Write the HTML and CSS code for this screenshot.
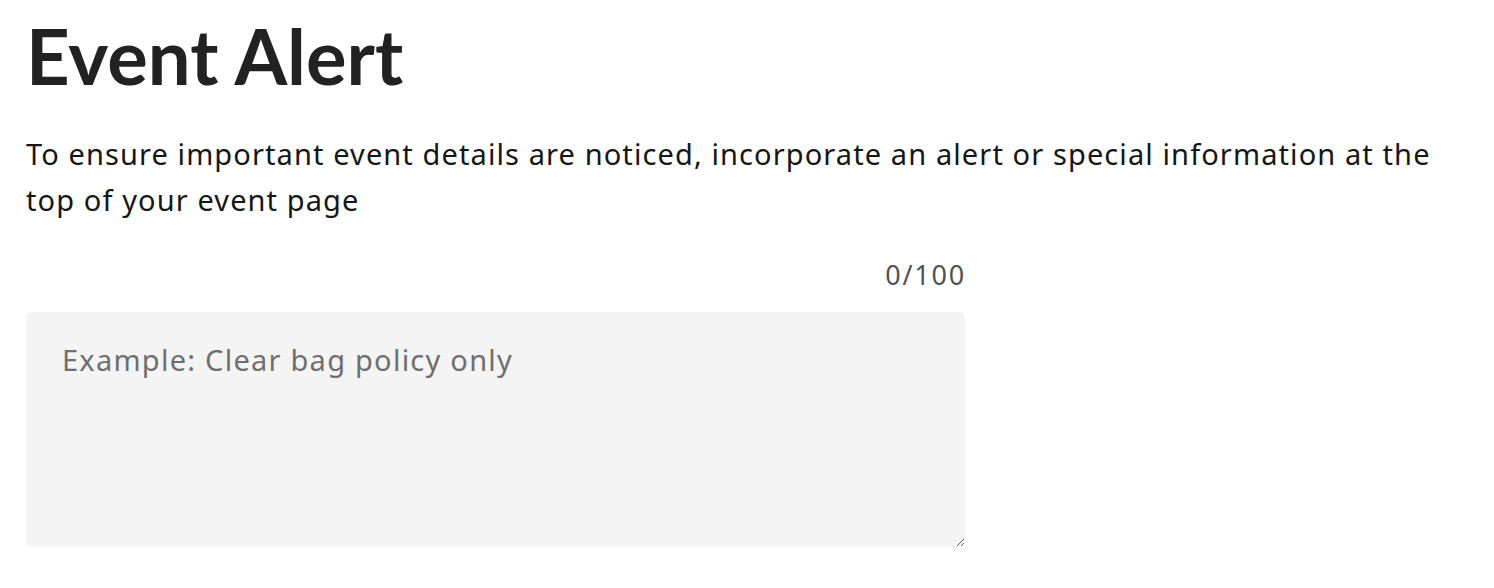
FILE: index.html
```html
<!DOCTYPE html>
<html lang="en">
<head>
<meta charset="utf-8">
<title>Event Alert</title>
<link rel="stylesheet" href="styles.css">
</head>
<body>
<main class="page">
  <h1 class="title">Event Alert</h1>
  <p class="desc">To ensure important event details are noticed, incorporate an alert or special information at the top of your event page</p>
  <div class="field">
    <div class="counter">0/100</div>
    <textarea class="input" placeholder="Example: Clear bag policy only"></textarea>
  </div>
</main>
</body>
</html>
```

FILE: styles.css
```css
html, body {
  margin: 0;
  padding: 0;
  background: #ffffff;
}
.page {
  padding: 12px 26px 0 26px;
  width: 1470px;
  box-sizing: border-box;
}
.title {
  margin: 0;
  font-family: Lato, "Liberation Sans", sans-serif;
  font-weight: 700;
  font-size: 76px;
  line-height: 88px;
  color: #222222;
}
.desc {
  margin: 31px 0 0 0;
  font-family: "Noto Sans", "Liberation Sans", sans-serif;
  font-size: 29px;
  letter-spacing: 1.1px;
  line-height: 46px;
  color: #161616;
}
.field {
  width: 939px;
  margin-top: 36px;
  display: flex;
  flex-direction: column;
}
.counter {
  align-self: flex-end;
  font-family: "Noto Sans", "Liberation Sans", sans-serif;
  font-size: 27px;
  line-height: 32px;
  color: #525252;
  letter-spacing: 1.8px;
  margin-right: -1px;
}
.input {
  margin-top: 21px;
  height: 235px;
  box-sizing: border-box;
  background: #f4f4f4;
  border: none;
  border-radius: 6px;
  padding: 28px 36px;
  font-family: "Noto Sans", "Liberation Sans", sans-serif;
  font-size: 29px;
  letter-spacing: 1.25px;
  line-height: 40px;
  color: #161616;
  resize: vertical;
  outline: none;
}
.input::placeholder {
  color: #6f6f6f;
}
```
